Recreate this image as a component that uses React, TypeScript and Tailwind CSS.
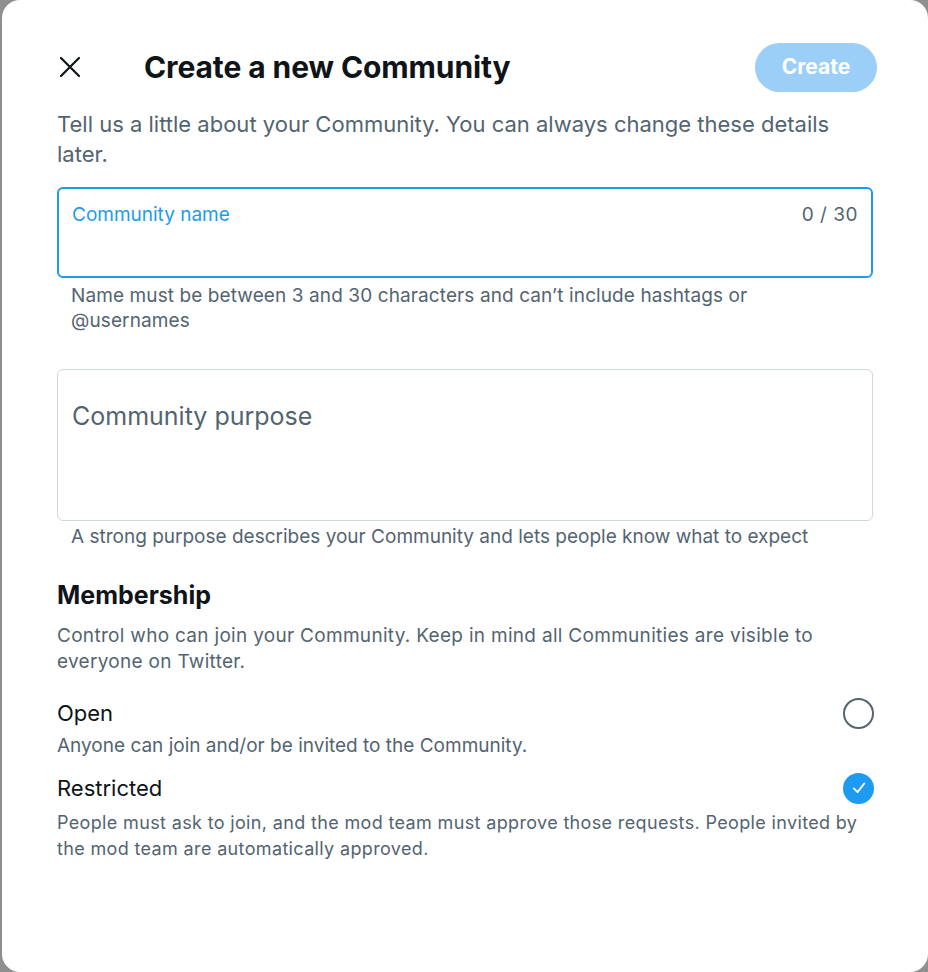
import React from "react";

export default function App() {
  return (
    <div className="w-[928px] h-[972px] bg-[#8f8f8f] pl-[2px]" style={{ fontFamily: "Inter, 'Noto Sans', sans-serif" }}>
      <div className="w-full h-full bg-white rounded-[18px] flex flex-col px-[55px]">
        <div className="flex items-center h-[66px] mt-[34px]">
          <div className="w-[30px] flex items-center justify-center -ml-[2px]">
            <svg width="24" height="24" viewBox="0 0 24 24" fill="none" stroke="#0f1419" strokeWidth="2.2" strokeLinecap="round">
              <path d="M3 3L21 21M21 3L3 21" />
            </svg>
          </div>
          <div className="ml-[59px] text-[30px] font-bold text-[#0f1419] tracking-[-0.1px]">Create a new Community</div>
          <div className="ml-auto -mr-[4px] h-[49px] w-[122px] rounded-full bg-[#9ccff8] flex items-center justify-center text-white text-[21px] font-bold">Create</div>
        </div>
        <p className="text-[22px] leading-[30px] text-[#536471] mt-[9px] pr-[40px]">
          Tell us a little about your Community. You can always change these details later.
        </p>
        <div className="mt-[18px] h-[91px] border-2 border-[#1d9bf0] rounded-[6px] px-[13px] pt-[12px] flex justify-between">
          <span className="text-[19px] text-[#1d9bf0]">Community name</span>
          <span className="text-[19px] tracking-[0.5px] text-[#536471]">0 / 30</span>
        </div>
        <p className="text-[19px] leading-[25px] tracking-[0.1px] text-[#536471] pl-[14px] pr-[70px] mt-[5px]">
          Name must be between 3 and 30 characters and can’t include hashtags or @usernames
        </p>
        <div className="mt-[36px] h-[152px] border border-[#cfd9de] rounded-[6px] px-[14px] pt-[28px]">
          <span className="text-[25px] text-[#536471]">Community purpose</span>
        </div>
        <p className="text-[19px] leading-[25px] text-[#536471] px-[14px] mt-[3px]">
          A strong purpose describes your Community and lets people know what to expect
        </p>
        <div className="mt-[28px] text-[25px] font-bold text-[#0f1419]">Membership</div>
        <p className="text-[19px] leading-[26px] tracking-[0.3px] text-[#536471] mt-[8px] pr-[40px]">
          Control who can join your Community. Keep in mind all Communities are visible to everyone on Twitter.
        </p>
        <div className="mt-[22px] flex items-center justify-between">
          <span className="text-[22px] text-[#0f1419]">Open</span>
          <div className="w-[31px] h-[31px] rounded-full border-2 border-[#536471] -mr-[1px]" />
        </div>
        <p className="text-[19px] leading-[26px] text-[#536471] mt-[3px]">Anyone can join and/or be invited to the Community.</p>
        <div className="mt-[13px] flex items-center justify-between">
          <span className="text-[22px] text-[#0f1419]">Restricted</span>
          <div className="w-[31px] h-[31px] rounded-full bg-[#1d9bf0] flex items-center justify-center -mr-[1px]">
            <svg width="18" height="18" viewBox="0 0 24 24" fill="none" stroke="white" strokeWidth="2.4" strokeLinecap="round" strokeLinejoin="round">
              <path d="M5 12.5L10 17.5L19 6" />
            </svg>
          </div>
        </div>
        <p className="text-[18px] leading-[26px] tracking-[0.35px] text-[#536471] mt-[5px]">
          People must ask to join, and the mod team must approve those requests. People invited by the mod team are automatically approved.
        </p>
      </div>
    </div>
  );
}
